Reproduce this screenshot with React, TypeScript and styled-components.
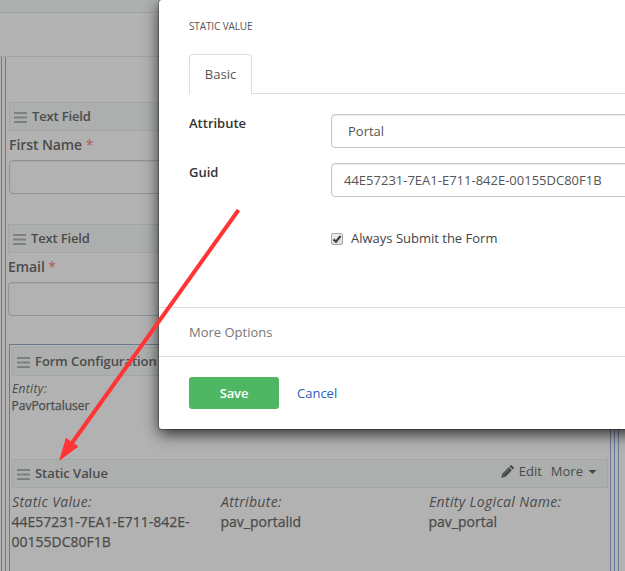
import React from "react";
import styled, { createGlobalStyle } from "styled-components";

const Global = createGlobalStyle`
  * { box-sizing: border-box; }
  html, body { margin: 0; padding: 0; overflow: hidden; }
  body { font-family: "Open Sans", "Noto Sans", sans-serif; font-size: 13px; color: #4b4b4b; background: #b2b2b2; }
`;

const Screen = styled.div`
  position: relative;
  width: 625px;
  height: 571px;
  overflow: hidden;
  background: #b2b2b2;
`;
const TopStrip = styled.div`
  height: 13px;
  background: #acb0ae;
  border-bottom: 1px solid #a2a4a3;
`;
const Toolbar = styled.div`
  height: 44px;
  border-bottom: 1px solid #a2a4a3;
`;
const OuterFrame = styled.div`
  margin-left: 1px;
  width: 618px;
  height: 514px;
  padding: 0 3px;
  border: solid #6a7a93;
  border-width: 0 1px;
`;
const InnerFrame = styled.div`
  height: 100%;
  border: solid #6a7a93;
  border-width: 0 1px;
  padding-top: 45px;
`;
const Field = styled.div<{ $left: number }>`
  height: 122px;
  margin-left: ${(p) => p.$left}px;
`;
const Bar = styled.div`
  display: flex;
  align-items: center;
  height: 29px;
  padding: 0 10px 0 4px;
  background: #acafae;
  border: 1px solid #a2a6a4;
`;
const BarTitle = styled.span<{ $spacing?: number }>`
  margin: -1px auto 0 5px;
  font-weight: 600;
  line-height: 18px;
  letter-spacing: ${(p) => p.$spacing ?? -0.05}px;
  white-space: nowrap;
`;
const GripLines = styled.svg`
  flex: none;
  margin-top: 3px;
`;
const FieldLabel = styled.div`
  height: 29px;
  line-height: 27px;
  font-size: 14px;
  font-weight: 600;
  letter-spacing: -0.08px;
  span { color: #b5575c; font-weight: 400; }
`;
const BlankInput = styled.div`
  height: 34px;
  border: 1px solid #929292;
  border-radius: 4px;
  box-shadow: inset 0 1px 1px rgba(0, 0, 0, 0.06);
`;
const Group = styled.div`
  margin-left: 3px;
  margin-right: 3px;
  height: 240px;
  padding: 2px;
  border: 1px solid #6a7a93;
  border-bottom: 0;
  margin-top: -2px;
`;
const Entity = styled.div`
  height: 83px;
  padding-top: 4px;
  font-size: 12px;
  line-height: 17px;
`;
const Term = styled.div`
  font-style: italic;
  letter-spacing: 0.35px;
`;
const Detail = styled.div`
  margin-left: -0.5px;
  -webkit-text-stroke: 0.25px currentColor;
`;
const BarAction = styled.span`
  display: flex;
  align-items: center;
  gap: 5px;
  margin: -5px 0 0 9px;
  line-height: 18px;
`;
const Columns = styled.div`
  display: grid;
  grid-template-columns: 209px 208px 1fr;
  padding-top: 4px;
  font-size: 14px;
  line-height: 20px;
`;
const Column = styled.div`
  white-space: nowrap;
`;

const Modal = styled.section`
  position: absolute;
  left: 159px;
  top: 0;
  width: 560px;
  height: 429px;
  background: #fff;
  border-radius: 3px;
  box-shadow: 0 0 0 1px rgba(0, 0, 0, 0.25), 0 5px 15px rgba(0, 0, 0, 0.75);
  color: #555;
`;
const ModalHeading = styled.h1`
  margin: 0;
  height: 54px;
  padding: 17px 0 0 30px;
  font-size: 10px;
  font-weight: 400;
  letter-spacing: -0.12px;
  line-height: 18px;
`;
const Tabs = styled.div`
  display: flex;
  margin-left: 30px;
  height: 40px;
`;
const Tab = styled.div`
  width: 63px;
  border: 1px solid #ddd;
  border-bottom: 0;
  border-radius: 4px 4px 0 0;
  line-height: 39px;
  text-align: center;
`;
const TabRule = styled.div`
  flex: 1;
  border-bottom: 1px solid #ddd;
`;
const FormRow = styled.div`
  display: grid;
  grid-template-columns: 142px 1fr;
  height: 49px;
  margin-left: 30px;
`;
const Label = styled.label`
  color: #333;
  font-weight: 600;
  line-height: 18px;
`;
const Control = styled.div<{ $indent: number }>`
  height: 34px;
  padding-left: ${(p) => p.$indent}px;
  border: 1px solid #c4c4c4;
  border-radius: 4px;
  box-shadow: inset 0 1px 1px rgba(0, 0, 0, 0.075);
  line-height: 33px;
`;
const FormBody = styled.div`
  height: 213px;
  padding-top: 20px;
`;
const CheckRow = styled.div`
  display: flex;
  align-items: center;
  gap: 8px;
  margin: 17px 0 0 172px;
  height: 18px;
  color: #444;
`;
const CheckBox = styled.span`
  display: flex;
  width: 12px;
  height: 12px;
  margin-top: 2px;
  border: 1px solid #a6a6a6;
  border-radius: 2px;
  background: linear-gradient(#f0f0f0, #dcdcdc);
`;
const MoreOptions = styled.div`
  height: 50px;
  padding-left: 30px;
  border: solid #ddd;
  border-width: 1px 0;
  color: #777;
  line-height: 48px;
`;
const Footer = styled.footer`
  display: flex;
  align-items: center;
  gap: 18px;
  padding: 20px 0 0 30px;
`;
const SaveButton = styled.button`
  width: 90px;
  height: 32px;
  padding: 0;
  border: 0;
  border-radius: 3px;
  background: #4fb763;
  color: #fff;
  font: 600 13px "Open Sans", sans-serif;
  letter-spacing: -0.15px;
`;
const CancelLink = styled.a`
  color: #2a5db8;
`;
const Arrow = styled.svg`
  position: absolute;
  inset: 0;
  pointer-events: none;
`;

const Grip = () => (
  <GripLines width="13" height="12" viewBox="0 0 13 12">
    <path d="M0 1h13M0 5.500h13M0 10h13" stroke="#7e8080" strokeWidth="2" />
  </GripLines>
);

const Pencil = () => (
  <svg width="13" height="13" viewBox="0 0 12 12">
    <path d="M.3 11.7 1 8.2 7.1 2l2.900 2.900-6.200 6.200zM7.800 1.300 8.700.4q.6-.6 1.200 0l1.700 1.700q.6.6 0 1.200l-.9.9z" fill="#444649" />
    <path d="m1.500 9 1.500 1.500M3 8l4.500-4.500" stroke="#a0a2a2" strokeWidth=".6" />
  </svg>
);

const TextField = ({ name, left }: { name: string; left: number }) => (
  <Field $left={left}>
    <Bar><Grip /><BarTitle $spacing={-0.15}>Text Field</BarTitle></Bar>
    <FieldLabel>{name} <span>*</span></FieldLabel>
    <BlankInput />
  </Field>
);

const details = [
  ["Static Value:", "44E57231-7EA1-E711-842E-", "00155DC80F1B"],
  ["Attribute:", "pav_portalid"],
  ["Entity Logical Name:", "pav_portal"],
];

export default function App() {
  return (
    <Screen>
      <Global />
      <TopStrip />
      <Toolbar />
      <OuterFrame>
        <InnerFrame>
          <TextField name="First Name" left={3} />
          <TextField name="Email" left={2} />
          <Group>
            <Bar><Grip /><BarTitle>Form Configuration</BarTitle></Bar>
            <Entity>
              <Term>Entity:</Term>
              <Detail>PavPortaluser</Detail>
            </Entity>
            <Bar>
              <Grip />
              <BarTitle>Static Value</BarTitle>
              <BarAction><Pencil />Edit</BarAction>
              <BarAction>More
                <svg width="9" height="5" viewBox="0 0 9 5"><path d="M.5 1h8l-4 4z" fill="#444649" /></svg>
              </BarAction>
            </Bar>
            <Columns>
              {details.map(([term, ...lines]) => (
                <Column key={term}>
                  <Term>{term}</Term>
                  {lines.map((line) => <Detail key={line}>{line}</Detail>)}
                </Column>
              ))}
            </Columns>
          </Group>
        </InnerFrame>
      </OuterFrame>
      <Modal>
        <ModalHeading>STATIC VALUE</ModalHeading>
        <Tabs><Tab>Basic</Tab><TabRule /></Tabs>
        <FormBody>
          <FormRow><Label>Attribute</Label><Control $indent={16}>Portal</Control></FormRow>
          <FormRow><Label>Guid</Label><Control $indent={12}>44E57231-7EA1-E711-842E-00155DC80F1B</Control></FormRow>
          <CheckRow>
            <CheckBox>
              <svg width="10" height="10" viewBox="0 0 10 10"><path d="M1.600 5.400 4 7.700 8.500 2" fill="none" stroke="#3d3d3d" strokeWidth="2.200" /></svg>
            </CheckBox>
            Always Submit the Form
          </CheckRow>
        </FormBody>
        <MoreOptions>More Options</MoreOptions>
        <Footer><SaveButton>Save</SaveButton><CancelLink>Cancel</CancelLink></Footer>
      </Modal>
      <Arrow width="625" height="571" viewBox="0 0 625 571">
        <path d="M238.500 210 72 443" stroke="#ff3535" strokeWidth="4" />
        <path d="M59 461 66 437.500 70 441 75 444 78.500 446.500z" fill="#ff3535" />
      </Arrow>
    </Screen>
  );
}
